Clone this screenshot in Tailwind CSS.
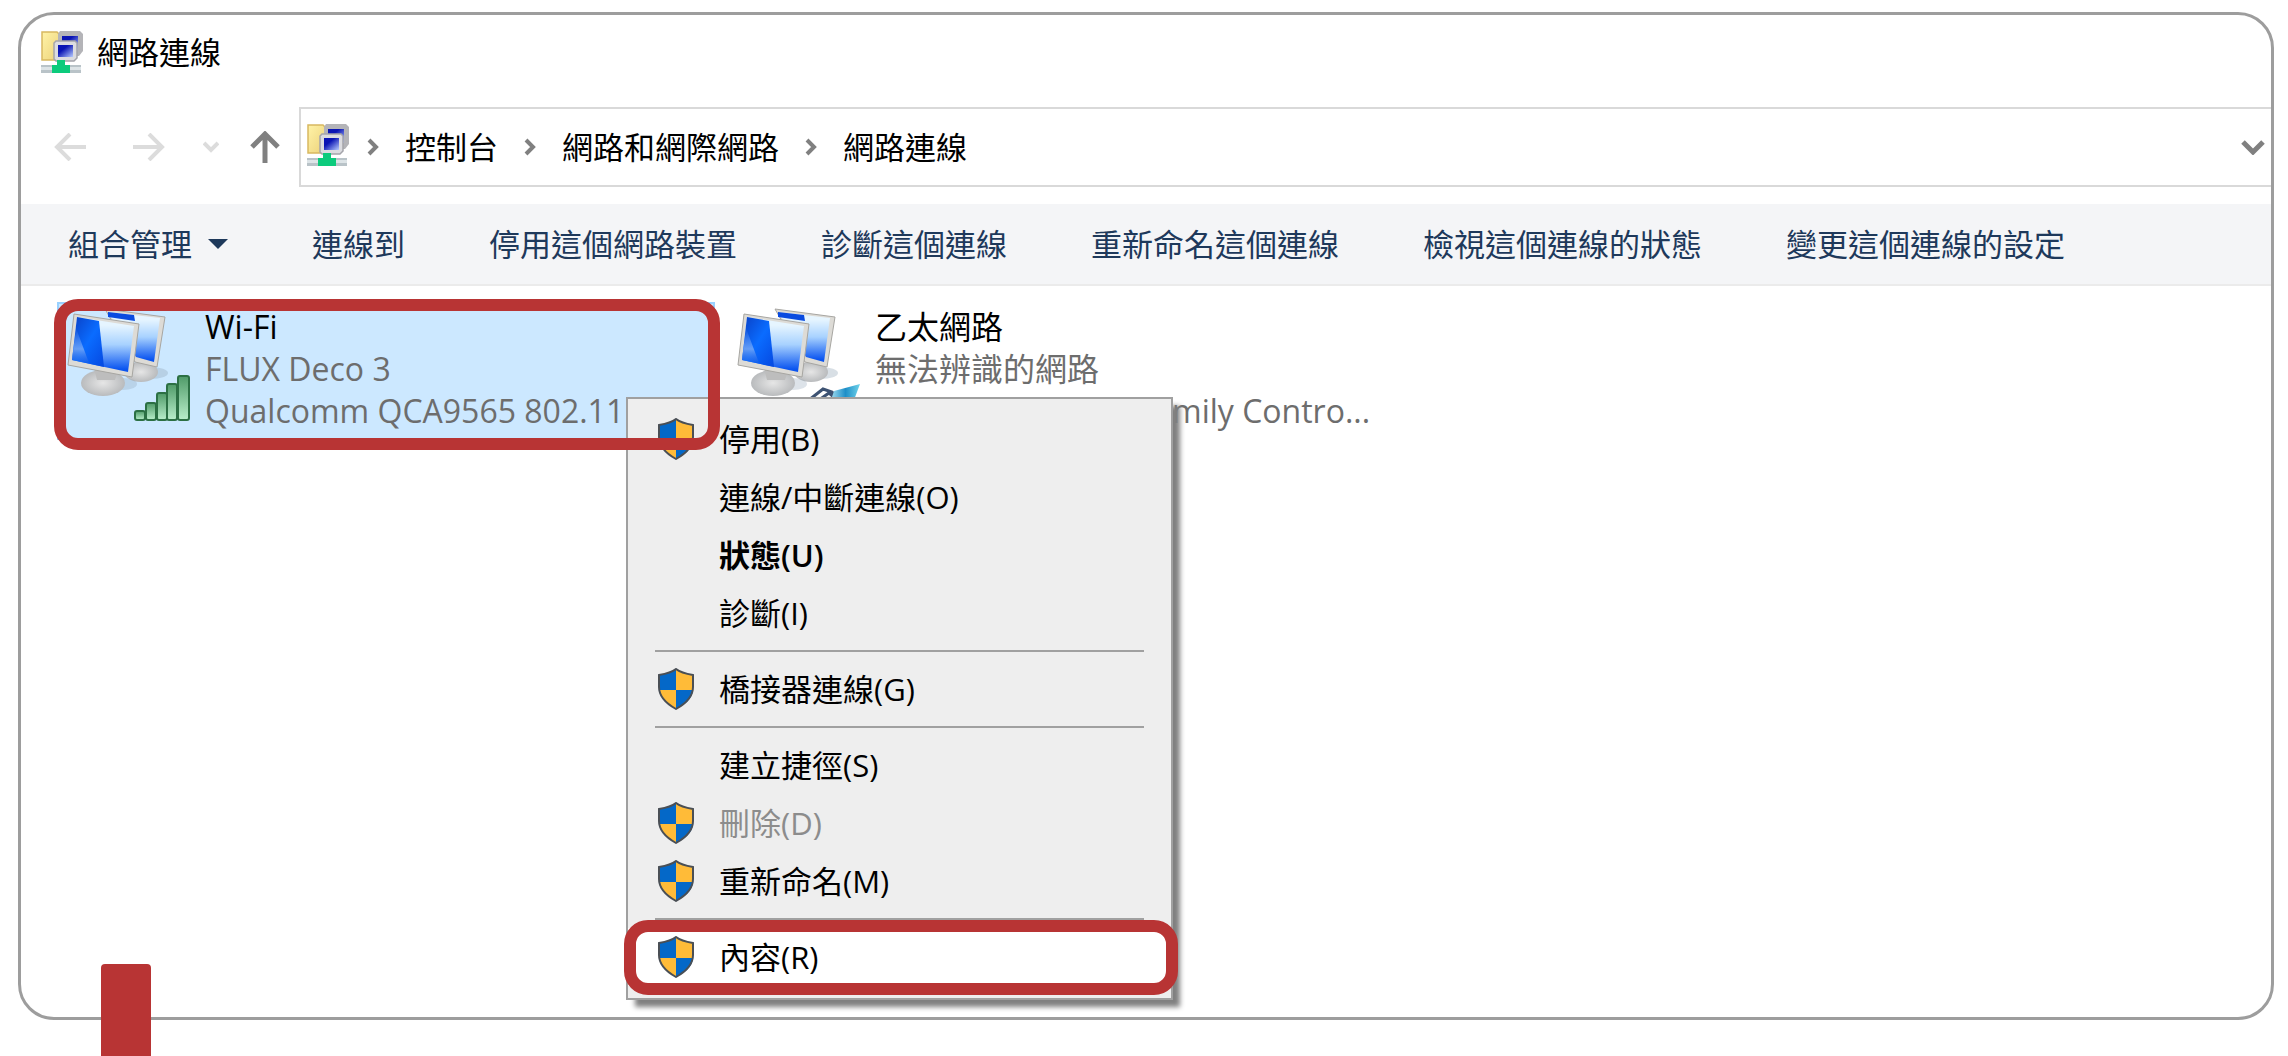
<!DOCTYPE html>
<html lang="zh-Hant">
<head>
    <meta charset="UTF-8">
    <meta name="viewport" content="width=device-width, initial-scale=1.0">
    <title>網路連線</title>
    <script src="https://cdn.jsdelivr.net/npm/@tailwindcss/browser@4"></script>
</head>
<body class="h-screen overflow-hidden bg-white font-['Open_Sans','Noto_Sans_CJK_TC',sans-serif] text-[31px] leading-[42px] text-black">
    <!-- shared icons -->
    <svg class="absolute size-0">
        <defs>
            <linearGradient id="folder" x1="0" y1="0" x2="1" y2="1">
                <stop offset="0" stop-color="#fff3a8"/><stop offset="1" stop-color="#ecd27a"/>
            </linearGradient>
            <linearGradient id="navy" x1="0" y1="0" x2="1" y2="1">
                <stop offset="0.35" stop-color="#0a14b4"/><stop offset="1" stop-color="#b8ccff"/>
            </linearGradient>
            <linearGradient id="screen" x1="0" y1="0" x2="0" y2="1">
                <stop offset="0.15" stop-color="#e6f5ff"/><stop offset="0.5" stop-color="#a8d2ff"/><stop offset="0.95" stop-color="#0b55f0"/>
            </linearGradient>
            <linearGradient id="glare" x1="0" y1="0" x2="1" y2="1">
                <stop offset="0" stop-color="#0a3fc4"/><stop offset="0.5" stop-color="#0a6cff"/><stop offset="1" stop-color="#0648e0"/>
            </linearGradient>
            <linearGradient id="shine" x1="0" y1="0" x2="0" y2="1">
                <stop offset="0" stop-color="#7fb0ff" stop-opacity="0"/><stop offset="0.6" stop-color="#8db6f5" stop-opacity=".7"/><stop offset="1" stop-color="#2a62e0" stop-opacity=".3"/>
            </linearGradient>
            <linearGradient id="bar" x1="0" y1="0" x2="0" y2="1">
                <stop offset="0" stop-color="#4f9a68"/><stop offset="1" stop-color="#b9efcb"/>
            </linearGradient>
            <linearGradient id="plug" x1="0" y1="0" x2="1" y2="0">
                <stop offset="0" stop-color="#9fdcf0"/><stop offset="0.5" stop-color="#1f8fc8"/><stop offset="1" stop-color="#6fd3ea"/>
            </linearGradient>
            <radialGradient id="foot">
                <stop offset="0" stop-color="#e6e6e6"/><stop offset="1" stop-color="#b9bbbd"/>
            </radialGradient>
        </defs>
        <symbol id="net" viewBox="0 0 42 42">
            <path d="M1 1h15l2 2v26H1z" fill="url(#folder)" stroke="#d8b860" stroke-width="1.5"/>
            <path d="M19 0h20l3 3v17l-4 5H17V3z" fill="#b4b4b8"/>
            <path d="M21 5h16v14H21z" fill="url(#navy)"/>
            <path d="M15 10h19l2 2v15l-3 3H15l-2-2V12z" fill="#dcdce0" stroke="#a4a4aa" stroke-width="1.5"/>
            <path d="M17 14h15v12H17z" fill="url(#navy)"/>
            <path d="M0 34h40v8H0z" fill="#b9c3c8"/>
            <path d="M0 36h40v3H0z" fill="#dde4e7"/>
            <path d="M16 29h8v5h5v8H11v-8h5z" fill="#0ccb7c"/>
        </symbol>
        <symbol id="pcs" viewBox="0 0 104 90">
            <ellipse cx="84" cy="65" rx="17" ry="6" fill="#8fa3b5" opacity=".35"/>
            <ellipse cx="74" cy="64" rx="17" ry="10" fill="url(#foot)"/>
            <path d="M38 1l60 8-8 50-22-5z" fill="#dddbd6" stroke="#a7a6a2"/>
            <path d="M41 4l52 6-6 44-18-5z" fill="url(#screen)"/>
            <path d="M41 4l26 3 1 6-27-4z" fill="#0a4be0"/>
            <ellipse cx="56" cy="76" rx="14" ry="6" fill="#8fa3b5" opacity=".3"/>
            <ellipse cx="36" cy="75" rx="22" ry="13" fill="url(#foot)"/>
            <path d="M27 60h25l-4 12H30z" fill="#bdbdbd"/>
            <path d="M7 6l65 10-7 53L1 57z" fill="#dddbd6" stroke="#a7a6a2" stroke-linejoin="round"/>
            <path d="M10 9l57 9-6 46L5 52z" fill="url(#screen)"/>
            <path d="M10 9l22 4 5 46L5 52z" fill="url(#glare)"/>
            <path d="M9 20l13 35L5 52z" fill="url(#shine)"/>
        </symbol>
        <symbol id="shield" viewBox="0 0 38 42">
            <path d="M19 1c5 4 11 5 17 6v12c0 10-8 17-17 22C10 36 2 29 2 19V7c6-1 12-2 17-6z" fill="#ffbb38"/>
            <path d="M19 1v21H2V7c6-1 12-2 17-6zM19 22h17c-1 10-8 14-17 19z" fill="#0468c8"/>
            <path d="M19 1c5 4 11 5 17 6v12c0 10-8 17-17 22C10 36 2 29 2 19V7c6-1 12-2 17-6z" fill="none" stroke="#4a4f55" stroke-width="2"/>
        </symbol>
        <symbol id="chev" viewBox="0 0 12 18">
            <path d="M2 2l7 7-7 7" fill="none" stroke="#808080" stroke-width="4"/>
        </symbol>
    </svg>

    <main class="relative mx-[14px] ml-[18px] mt-3 h-[1008px] overflow-hidden rounded-[36px] border-3 border-[#9d9d9d]">
        <!-- title bar -->
        <header class="flex h-[92px] items-start gap-[14px] pl-5 pt-4">
            <svg class="size-[42px]"><use href="#net"/></svg>
            <h1>網路連線</h1>
        </header>

        <!-- address bar -->
        <nav class="flex h-[80px] items-center">
            <button aria-label="上一頁" class="ml-[33px]"><svg class="h-7 w-8" viewBox="0 0 32 28" fill="none" stroke="#dcdcdc" stroke-width="4"><path d="M16 1L3 14l13 13M3 14h29"/></svg></button>
            <button aria-label="下一頁" class="ml-[47px]"><svg class="h-7 w-8" viewBox="0 0 32 28" fill="none" stroke="#dcdcdc" stroke-width="4"><path d="M16 1l13 13-13 13M29 14H0"/></svg></button>
            <button aria-label="最近" class="ml-[38px]"><svg class="h-3 w-4" viewBox="0 0 16 12" fill="none" stroke="#dcdcdc" stroke-width="4"><path d="M1 2l7 7 7-7"/></svg></button>
            <button aria-label="上移" class="ml-[31px]"><svg class="h-8 w-[30px]" viewBox="0 0 30 32" fill="none" stroke="#808080" stroke-width="5"><path d="M2 16L15 3l13 13M15 3v29"/></svg></button>
            <div class="ml-[19px] flex h-full flex-1 items-center border-2 border-r-0 border-[#d9d9d9] pl-[6px] pr-[6px]">
                <svg class="mb-1 size-[42px]"><use href="#net"/></svg>
                <svg class="ml-[18px] h-[18px] w-3"><use href="#chev"/></svg>
                <a href="#" class="ml-[26px]">控制台</a>
                <svg class="ml-[26px] h-[18px] w-3"><use href="#chev"/></svg>
                <a href="#" class="ml-[26px]">網路和網際網路</a>
                <svg class="ml-[26px] h-[18px] w-3"><use href="#chev"/></svg>
                <a href="#" class="ml-[26px]">網路連線</a>
                <button aria-label="展開" class="ml-auto"><svg class="h-4 w-6" viewBox="0 0 24 16" fill="none" stroke="#808080" stroke-width="5"><path d="M2 3l10 10L22 3"/></svg></button>
            </div>
        </nav>

        <!-- toolbar -->
        <div class="mt-[17px] flex h-[82px] items-center gap-[84px] border-b-2 border-[#ebebeb] bg-[#f4f5f7] pl-[47px] text-[#1e395b]">
            <button class="flex items-center gap-4">組合管理<svg class="h-[10px] w-5" viewBox="0 0 20 10"><path d="M0 0h20L10 10z" fill="#1e395b"/></svg></button>
            <button>連線到</button>
            <button>停用這個網路裝置</button>
            <button>診斷這個連線</button>
            <button>重新命名這個連線</button>
            <button>檢視這個連線的狀態</button>
            <button>變更這個連線的設定</button>
        </div>

        <!-- connections -->
        <section class="flex gap-3 pl-9 pt-4 text-[32px]">
            <div class="flex h-[138px] w-[658px] border-2 border-[#99d1ff] bg-[#cce8ff]">
                <div class="relative ml-2 mt-1 h-[122px] w-[138px] shrink-0">
                    <svg class="h-[90px] w-[104px]"><use href="#pcs"/></svg>
                    <svg class="absolute left-[67px] top-[67px] h-[46px] w-14" viewBox="0 0 56 46" fill="url(#bar)" stroke="#2c7044" stroke-width="2">
                        <rect x="1" y="36" width="10" height="9" rx="2"/><rect x="12" y="28" width="10" height="17" rx="2"/><rect x="23" y="18" width="10" height="27" rx="2"/><rect x="33" y="9" width="10" height="36" rx="2"/><rect x="44" y="1" width="11" height="44" rx="2"/>
                    </svg>
                </div>
                <div class="pt-[2px] text-[#6d6d6d]">
                    <p class="text-black">Wi-Fi</p>
                    <p>FLUX Deco 3</p>
                    <p class="whitespace-nowrap">Qualcomm QCA9565 802.11</p>
                </div>
            </div>
            <div class="flex h-[138px] w-[658px] border-2 border-transparent">
                <div class="relative ml-2 mt-1 h-[122px] w-[138px] shrink-0">
                    <svg class="h-[90px] w-[104px]"><use href="#pcs"/></svg>
                    <svg class="absolute left-[70px] top-[74px] h-6 w-[54px]" viewBox="0 0 54 24"><path d="M2 18l14-11 9 3 8 8M12 18l10-7 6 5" fill="none" stroke="#3d5272" stroke-width="3"/><path d="M27 9l26-7-6 16H24z" fill="url(#plug)"/></svg>
                </div>
                <div class="pt-[2px] text-[#6d6d6d]">
                    <p class="text-black">乙太網路</p>
                    <p>無法辨識的網路</p>
                    <p class="whitespace-nowrap">Realtek PCIe GBE Family Contro...</p>
                </div>
            </div>
        </section>
    </main>

    <!-- context menu -->
    <div role="menu" class="absolute left-[626px] top-[397px] w-[547px] border-2 border-[#a0a0a0] bg-[#eeeeee] pb-3 pt-[11px] shadow-[8px_8px_5px_-1px_#808080]">
        <button role="menuitem" class="flex h-[58px] w-full items-center gap-6 pl-[29px]"><svg class="h-[42px] w-[38px]"><use href="#shield"/></svg>停用(B)</button>
        <button role="menuitem" class="flex h-[58px] w-full items-center pl-[91px]">連線/中斷連線(O)</button>
        <button role="menuitem" class="flex h-[58px] w-full items-center pl-[91px] font-semibold">狀態(U)</button>
        <button role="menuitem" class="flex h-[58px] w-full items-center pl-[91px]">診斷(I)</button>
        <hr class="mx-[27px] my-2 border-t-2 border-[#a0a0a0]">
        <button role="menuitem" class="flex h-[58px] w-full items-center gap-6 pl-[29px]"><svg class="h-[42px] w-[38px]"><use href="#shield"/></svg>橋接器連線(G)</button>
        <hr class="mx-[27px] my-2 border-t-2 border-[#a0a0a0]">
        <button role="menuitem" class="flex h-[58px] w-full items-center pl-[91px]">建立捷徑(S)</button>
        <button role="menuitem" class="flex h-[58px] w-full items-center gap-6 pl-[29px] text-[#8c8c8c]" disabled><svg class="h-[42px] w-[38px]"><use href="#shield"/></svg>刪除(D)</button>
        <button role="menuitem" class="flex h-[58px] w-full items-center gap-6 pl-[29px]"><svg class="h-[42px] w-[38px]"><use href="#shield"/></svg>重新命名(M)</button>
        <hr class="mx-[27px] my-2 border-t-2 border-[#a0a0a0]">
        <button role="menuitem" class="flex h-[58px] w-full items-center gap-6 bg-white pl-[29px]"><svg class="h-[42px] w-[38px]"><use href="#shield"/></svg>內容(R)</button>
    </div>

    <!-- highlights -->
    <div class="pointer-events-none absolute left-[54px] top-[299px] h-[151px] w-[666px] rounded-3xl border-12 border-[#b83434]"></div>
    <div class="pointer-events-none absolute left-[624px] top-[920px] h-[75px] w-[554px] rounded-3xl border-12 border-[#b83434]"></div>
    <div class="absolute bottom-0 left-[101px] h-[92px] w-[50px] rounded-t bg-[#b83434]"></div>
</body>
</html>
